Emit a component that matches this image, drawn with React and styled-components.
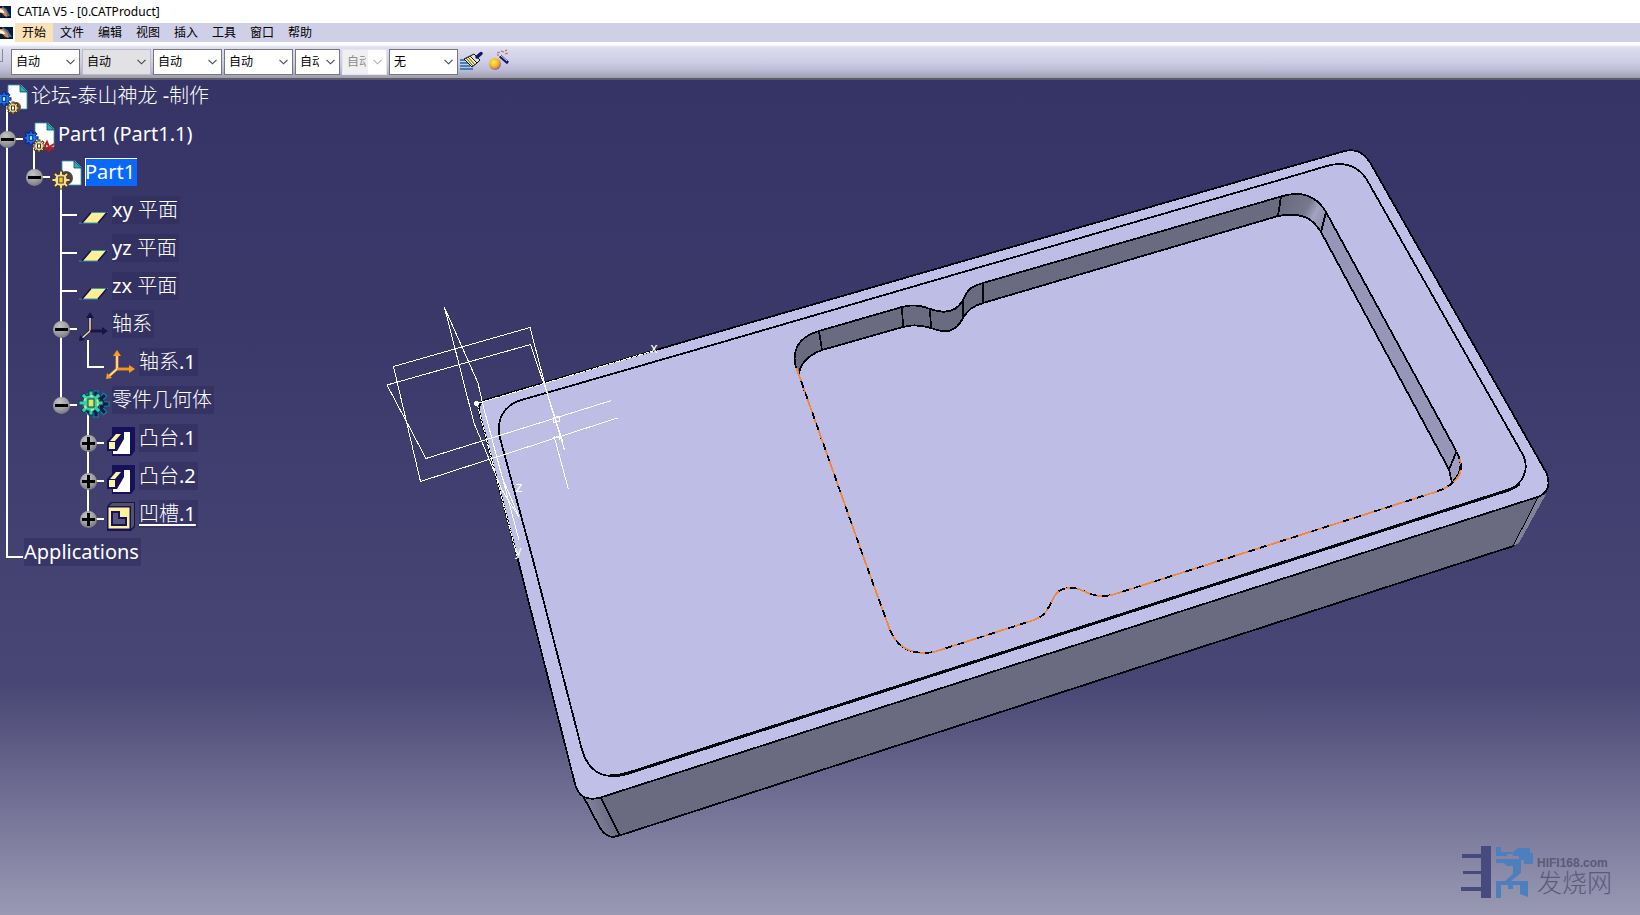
import React from 'react';
import styled, { createGlobalStyle, css } from 'styled-components';

const GlobalStyle = createGlobalStyle`
  body {
    margin: 0;
  }

  * {
    box-sizing: border-box;
  }

  button,
  select {
    font: inherit;
    color: inherit;
  }
`;

const Window = styled.div`
  display: flex;
  flex-direction: column;
  min-height: 100vh;
  font-family: 'Noto Sans', 'Noto Sans CJK SC', sans-serif;
  font-size: 12px;
  color: #000;
  background: #fff;
`;

const TitleBar = styled.header`
  display: flex;
  align-items: center;
  gap: 6px;
  height: 23px;
`;

const Title = styled.h1`
  margin: 0;
  font-size: 12px;
  line-height: 23px;
  font-weight: 400;
`;

const MenuBar = styled.nav`
  display: flex;
  align-items: center;
  height: 19px;
  background: #cfcfe8;
`;

const MenuIconBox = styled.span`
  display: flex;
  align-items: center;
  width: 15px;
  height: 19px;
  background: #fff;
`;

const MenuItem = styled.button`
  width: 38px;
  height: 19px;
  padding: 0;
  border: 0;
  line-height: 18px;
  background: ${({ $active }) => ($active ? '#fbe1b6' : 'transparent')};
`;

const ToolBar = styled.div`
  display: flex;
  align-items: flex-start;
  gap: 2px;
  height: 38px;
  padding-top: 7px;
  border-bottom: 2px solid #5c5c66;
  background: linear-gradient(#fff 0, #fafaff 3px, #dedeee 5px, #cdcde6 20px, #bcbcd6 28px, #9d9dab 36px);
`;

const Grip = styled.span`
  width: 3px;
  height: 13px;
  margin-right: 6px;
  border-right: 1px solid #8a8a96;
  border-bottom: 1px solid #8a8a96;
`;

const Combo = styled.label`
  display: grid;
  width: ${({ $narrow }) => ($narrow ? '45px' : '69px')};
  height: 26px;
  align-items: center;
  border: 1px solid ${({ $tone }) => ($tone === 'disabled' ? '#e4e4ee' : $tone === 'gray' ? '#bcbcc4' : '#77777f')};
  background: ${({ $tone }) => ($tone === 'gray' ? '#e2e2e4' : '#fff')};

  > * {
    grid-area: 1 / 1;
  }

  svg {
    justify-self: end;
    margin-right: 4px;
    pointer-events: none;
  }
`;

const ComboSelect = styled.select`
  width: 100%;
  height: 24px;
  padding: 0 20px 0 4px;
  border: 0;
  appearance: none;
  background: transparent;
  line-height: 20px;
  overflow: hidden;
  text-overflow: clip;

  &:disabled {
    color: #8c8c8c;
    opacity: 1;
    background: linear-gradient(90deg, #f0f0f2 25px, #fff 25px);
  }
`;

const ToolButton = styled.button`
  display: flex;
  width: 26px;
  height: 26px;
  padding: 0;
  border: 0;
  background: transparent;
`;

const Viewport = styled.main`
  position: relative;
  flex: 1;
  overflow: hidden;
  background: linear-gradient(#363466 0%, #3a396a 30%, #434271 58%, #474674 72%, #5c5a83 79%, #9a99b4 100%);
`;

const ModelCanvas = styled.svg`
  position: absolute;
  top: 0;
  left: 0;
  width: 100%;
  height: auto;
`;

const Tree = styled.ul`
  position: relative;
  width: max-content;
  margin: 0;
  padding: 2px 0 0;
  list-style: none;
  color: #fff;
`;

const TreeRow = styled.li`
  display: flex;
  align-items: flex-start;
  height: 38px;
`;

const upper = 'linear-gradient(#fff, #fff) 6px 0 / 2px 20px no-repeat';
const full = 'linear-gradient(#fff, #fff) 6px 0 / 2px 38px no-repeat';
const stub = 'linear-gradient(#fff, #fff) 6px 18px / 17px 2px no-repeat';

const guideBackground = {
  blank: 'none',
  line: full,
  tee: `${full}, ${stub}`,
  corner: `${upper}, ${stub}`,
  end: `${upper}, ${stub}`,
};

const Guide = styled.span`
  display: flex;
  align-items: center;
  flex: none;
  width: ${({ $kind }) => ($kind === 'end' ? '24px' : '27px')};
  height: 38px;
  background: ${({ $kind }) => guideBackground[$kind]};
`;

const Toggle = styled.button`
  display: flex;
  width: 17px;
  height: 17px;
  margin-left: -1px;
  padding: 0;
  border: 0;
  border-radius: 50%;
  background: radial-gradient(circle at 40% 30%, #c4c4c4, #9a9a9c 50%, #5e5e66);
`;

const NodeIcon = styled.svg`
  flex: none;
  width: 34px;
  height: 38px;
  margin-left: -3px;
`;

const Label = styled.span`
  height: 28px;
  padding: 0 2px 0 0;
  font-size: 20px;
  line-height: 28px;
  font-weight: 300;
  font-family: 'Noto Sans', 'Noto Sans CJK SC', sans-serif;
  white-space: pre;
  ${({ $plain }) => !$plain && css`
    background: rgba(46, 42, 92, 0.5);
  `}
  ${({ $selected }) => $selected && css`
    background: #0a68fb;
    box-shadow: inset 1px 1px #fff;
  `}
  ${({ $current }) => $current && css`
    text-decoration: underline;
    text-underline-offset: 3px;
  `}
`;

const Latin = styled.span`
  font-weight: 400;
`;

const Watermark = styled.aside`
  position: absolute;
  right: 28px;
  bottom: 17px;
  display: flex;
  align-items: flex-end;
  gap: 4px;
  color: #5b5a78;
`;

const WatermarkText = styled.div`
  display: flex;
  flex-direction: column;
`;

const Domain = styled.strong`
  font: bold 12px/12px 'Liberation Sans', sans-serif;
`;

const SiteName = styled.span`
  font: 300 25px/29px 'Liberation Sans', 'Noto Sans CJK SC', sans-serif;
`;

const AppIcon = ({ size = 12 }) => (
  <svg width={size} height="12" viewBox="0 0 12 12" preserveAspectRatio="none" aria-hidden="true">
    <path d="M0 0H12V12H0Z" fill="#081a33" />
    <path d="M2 0L7 3L11 10L7 10L3 6Z" fill="#2c78b8" />
    <path d="M0 2L3 2L7 6L8 11L5 10L2 7L0 7Z" fill="#ed8438" />
    <path d="M0 3L3 4L5 7L3 7L0 6Z" fill="#fff" />
  </svg>
);

const Chevron = ({ color = '#444' }) => (
  <svg width="9" height="6" viewBox="0 0 9 6" aria-hidden="true">
    <path d="M.5 .8L4.500 4.800L8.500 .8" fill="none" stroke={color} strokeWidth="1.100" />
  </svg>
);

const BrushIcon = () => (
  <svg width="26" height="26" viewBox="3 0 26 26" aria-hidden="true">
    <path d="M3 11H10M3 14H11M3 17H13M3 20H16" stroke="#1769b4" strokeWidth="1.400" />
    <path d="M7 10L13 7L20 14L15 18Z" fill="#fff8a0" stroke="#111" />
    <path d="M9 9L16 17M11 8L18 16" stroke="#111" strokeWidth=".8" />
    <path d="M13 7L17 5L23 11L20 14Z" fill="#e4e4e8" stroke="#111" />
    <path d="M20 8L24 4.500" stroke="#14146a" strokeWidth="3.500" strokeLinecap="round" />
  </svg>
);

const WandIcon = () => (
  <svg width="26" height="26" viewBox="1 0 26 26" aria-hidden="true">
    <defs>
      <radialGradient id="ball" cx=".4" cy=".35" r=".65">
        <stop offset="0" stopColor="#fff04a" />
        <stop offset=".6" stopColor="#f2b521" />
        <stop offset="1" stopColor="#a05a9a" />
      </radialGradient>
    </defs>
    <circle cx="8" cy="15" r="6" fill="url(#ball)" />
    <path d="M13 7L21 14" stroke="#14146a" strokeWidth="3" />
    <path d="M13 6L20 12" stroke="#e8e8f4" strokeWidth="1" />
    <path d="M10 4L13 3M14 2L17 3M18 2L20 1M18 5L21 4M11 7V5" stroke="#c46a5a" strokeWidth="1.200" />
  </svg>
);

// eight square teeth around a hub
const Gear = ({ cx, cy, r, fill, edge, core }) => {
  const tooth = { x: cx - r / 6, y: cy - r, width: r / 3, height: r };
  const angles = [0, 45, 90, 135, 180, 225, 270, 315];
  return (
    <g>
      {angles.map((angle) => (
        <rect key={angle} {...tooth} fill={fill} stroke={edge} transform={`rotate(${angle} ${cx} ${cy})`} />
      ))}
      <circle cx={cx} cy={cy} r={r * 0.65} fill={fill} />
      <rect x={cx - r / 4} y={cy - r / 3} width={r / 2} height={r / 1.5} fill={core} stroke={edge} />
    </g>
  );
};

const Paper = () => (
  <g>
    <path d="M8 3H21L27 9V27H8Z" fill="#fff" stroke="#2f9fa8" strokeWidth=".8" />
    <path d="M20 3L27 10H20Z" fill="#25b4b0" stroke="#0b4b66" strokeWidth=".8" />
  </g>
);

const Arrows = ({ color, edge, tip }) => (
  <g fill="none">
    <path d="M9 5V21H24M9 21L0 29" stroke={edge} strokeWidth="3" />
    <path d="M9 5V21L0 29" stroke={color} strokeWidth="1.600" />
    <path d="M9 21H24" stroke={tip} strokeWidth="1.400" />
    <path d="M9 2L13 8H5ZM27 21L21 17V25ZM-2 31L-1 25L4 30Z" fill={tip} />
  </g>
);

const PadShape = () => (
  <g>
    <path d="M4 3H27V27L23 32H4Z" fill="#17115c" />
    <path d="M10 8H22V30H5V26H9L15 15V8Z" fill="#fff" />
    <path d="M-1 17L8 8H16V15L9 27H-1Z" fill="#17115c" />
    <path d="M2 17L8 10H13L7 17Z" fill="#fff5a0" />
    <path d="M1 18H7V25H1Z" fill="#fff5a0" />
  </g>
);

const glyphs = {
  product: (
    <g>
      <path d="M7 24V38" stroke="#fff" strokeWidth="2" />
      <Paper />
      <Gear cx={4} cy={17} r={7} fill="#1e78ee" edge="#07258c" core="#a8f0ff" />
      <circle cx="16" cy="25" r="5" fill="#6b5640" />
      <Gear cx={13} cy={26} r={6} fill="#f6e1a0" edge="#4b3718" core="#fff" />
    </g>
  ),
  component: (
    <g>
      <path d="M7 24V38" stroke="#fff" strokeWidth="2" />
      <Paper />
      <Gear cx={4} cy={18} r={7} fill="#1e78ee" edge="#07258c" core="#a8f0ff" />
      <path d="M16 30L20 22L22 27L27 29M18 30L27 24M21 31L25 28" fill="none" stroke="#c01824" strokeWidth="2" />
      <Gear cx={12} cy={26} r={6} fill="#f6e1a0" edge="#4b3718" core="#fff" />
    </g>
  ),
  part: (
    <g>
      <path d="M7 28V38" stroke="#fff" strokeWidth="2" />
      <Paper />
      <circle cx="12" cy="20" r="7" fill="#4d4650" />
      <Gear cx={7} cy={22} r={9} fill="#f5df94" edge="#4b3718" core="#e9cf3d" />
    </g>
  ),
  plane: (
    <g>
      <path d="M1 27L10 16.500H26L17 27Z" fill="#ffee93" />
      <path d="M-2 27H17M10 16.500H27" stroke="#2c9ca8" strokeWidth="1" />
      <path d="M1 27L10 16.500M17 27L26 16.500" stroke="#14104e" strokeWidth="1.500" />
    </g>
  ),
  axes: (
    <g>
      <path d="M7 30V38" stroke="#fff" strokeWidth="2" />
      <Arrows color="#f2d6b0" edge="#221b3a" tip="#17124c" />
    </g>
  ),
  axis: <Arrows color="#ffe9a0" edge="#e08a20" tip="#ff9a1e" />,
  body: (
    <g>
      <path d="M7 28V38" stroke="#fff" strokeWidth="2" />
      <Gear cx={15} cy={18} r={13} fill="#0b1d50" edge="#0c8f96" core="#071a4a" />
      <Gear cx={10} cy={17} r={12} fill="#38cfae" edge="#0a3d62" core="#d8ee58" />
      <circle cx="10" cy="17" r="7" fill="none" stroke="#c8ec5c" strokeWidth="2" strokeDasharray="3 5" />
    </g>
  ),
  pad: <PadShape />,
  pocket: (
    <g>
      <path d="M3 2H27V27L23 31H-1V6Z" fill="#17115c" />
      <path d="M4 3H26V26L23 29V6H1Z" fill="#55525f" />
      <path d="M0 7H22V29H0Z" fill="#fff09a" stroke="#17115c" />
      <path d="M4 12H11V18H18V25H4Z" fill="#55577e" stroke="#17115c" strokeWidth="2" />
    </g>
  ),
};

const menus = ['开始', '文件', '编辑', '视图', '插入', '工具', '窗口', '帮助'];

const combos = [
  { name: '填充颜色', value: '自动' },
  { name: '透明度', value: '自动', tone: 'gray' },
  { name: '线宽', value: '自动' },
  { name: '线型', value: '自动' },
  { name: '点符号', value: '自动', narrow: true },
  { name: '渲染样式', value: '自动', narrow: true, tone: 'disabled' },
  { name: '图层', value: '无' },
];

const nodes = [
  { guides: [], icon: 'product', label: '论坛-泰山神龙 -制作', plain: true },
  { guides: ['tee'], toggle: 'minus', icon: 'component', label: 'Part1 (Part1.1)', plain: true },
  { guides: ['line', 'corner'], toggle: 'minus', icon: 'part', label: 'Part1', selected: true },
  { guides: ['line', 'blank', 'tee'], icon: 'plane', label: 'xy 平面' },
  { guides: ['line', 'blank', 'tee'], icon: 'plane', label: 'yz 平面' },
  { guides: ['line', 'blank', 'tee'], icon: 'plane', label: 'zx 平面' },
  { guides: ['line', 'blank', 'tee'], toggle: 'minus', icon: 'axes', label: '轴系' },
  { guides: ['line', 'blank', 'line', 'corner'], icon: 'axis', label: '轴系.1' },
  { guides: ['line', 'blank', 'corner'], toggle: 'minus', icon: 'body', label: '零件几何体' },
  { guides: ['line', 'blank', 'blank', 'tee'], toggle: 'plus', icon: 'pad', label: '凸台.1' },
  { guides: ['line', 'blank', 'blank', 'tee'], toggle: 'plus', icon: 'pad', label: '凸台.2' },
  { guides: ['line', 'blank', 'blank', 'corner'], toggle: 'plus', icon: 'pocket', label: '凹槽.1', current: true },
  { guides: ['end'], label: 'Applications' },
];

// Han characters keep the light weight, everything else is regular
const renderLabel = (text) =>
  text.split(/([\x20-\x7e]+)/).filter(Boolean).map((run, i) =>
    /^[\x20-\x7e]/.test(run) ? <Latin key={i}>{run}</Latin> : run
  );

const TreeNode = ({ node }) => (
  <TreeRow>
    {node.guides.map((kind, i) => (
      <Guide key={i} $kind={kind === 'tee' && node.toggle === 'plus' ? 'tee' : kind}>
        {node.toggle && i === node.guides.length - 1 && (
          <Toggle aria-label={node.toggle === 'plus' ? '展开' : '折叠'}>
            <svg width="17" height="17" viewBox="0 0 17 17" aria-hidden="true">
              <path d={node.toggle === 'plus' ? 'M2 8.500H15M8.500 2V15' : 'M2 8.500H15'} stroke="#000" strokeWidth="3" />
            </svg>
          </Toggle>
        )}
      </Guide>
    ))}
    {node.icon && (
      <NodeIcon viewBox="-3 0 34 38" aria-hidden="true">{glyphs[node.icon]}</NodeIcon>
    )}
    <Label
      $plain={node.plain}
      $selected={node.selected}
      $current={node.current}
    >
      {renderLabel(node.label)}
    </Label>
  </TreeRow>
);

const pocketTop = 'M798 372C795 366 794 360 795 355C796 342 806 335 819 331L902 307C912 304 920 305 930 309C944 314 956 313 963 300C968 288 973 286 983 283L1281 196.500C1302 190 1317 197 1326 212';
const pocketFloor = 'L1321 232C1312 217 1300 212 1278 216L983 303C973 306 968 310 963 318C956 332 946 334 931 328C921 325 913 324 903 327L822 350C809 355 801 363 799 373Z';
const pocketRim = 'M796.500 368L864.500 560L890 630C896 645 909 656 934 652L1031 621C1049 616 1048 605 1056 594C1061 588 1070 587 1079 589C1090 594 1097 598 1112 595L1437 491.500C1455 485 1464 474 1460 460L1456.500 451.500';

const Model = () => (
  <ModelCanvas viewBox="0 80 1640 835" role="img" aria-label="Part1" shapeRendering="crispEdges">
    <defs>
      <linearGradient id="cornerWall" gradientUnits="userSpaceOnUse" x1="1281" y1="200" x2="1324" y2="222">
        <stop offset="0" stopColor="#69697f" />
        <stop offset=".55" stopColor="#77778d" />
        <stop offset=".75" stopColor="#a3a3c2" />
        <stop offset="1" stopColor="#8f8fac" />
      </linearGradient>
      <linearGradient id="leftWall" gradientUnits="userSpaceOnUse" x1="583" y1="815" x2="612" y2="806">
        <stop offset="0" stopColor="#8988a5" />
        <stop offset="1" stopColor="#68687e" />
      </linearGradient>
    </defs>
    <g stroke="#05050c" strokeWidth="1.800" strokeLinejoin="round">
      {/* side walls */}
      <path d="M582 794L600 828Q606 837 613 837L619.500 835.500L600 795Z" fill="url(#leftWall)" />
      <path d="M600.500 797L619.500 835.500L1513.500 546L1539 496.500Z" fill="#6a6a80" />
      <path d="M1539 496.500L1513.500 546L1519 543L1546 494Z" fill="#818198" stroke="none" />
      {/* top face and lip */}
      <path
        d="M485 400L690 340L780 314L1240 181L1343 151.500Q1361 146 1371.500 165L1546.500 473Q1553 490 1539 496.500L600.500 797.500Q580 803 575 784L518 560L480 415Q477 404 485 400Z"
        fill="#c0bfe8"
      />
      <path
        d="M521.500 400L690 351.500L1279.500 180L1325 166.500C1345 160 1359 167 1367 180L1523 455C1530 469 1523 485 1507 490.500L627 773.500C602 781 588 770 582 750L533 560L500.500 440C495 420 504 405 521.500 400Z"
        fill="#bebde6"
      />
      <path d="M610 776Q618 776 627 773.500L1507 490.500Q1515 488 1519 484" fill="none" strokeWidth="3" />
      {/* pocket */}
      <path d={`${pocketTop}${pocketFloor}`} fill="#6a6a80" />
      <path d="M1281 196.500C1302 190 1317 197 1326 212L1321 232C1312 217 1300 212 1278 216Z" fill="url(#cornerWall)" />
      <path d="M1326 212L1456.500 451.500L1449 469.500L1321 232Z" fill="#9796b8" />
      <path d="M1456.500 451.500Q1464 465 1458 475L1452 483L1449 469.500Z" fill="#a09fc2" />
      <path d="M819 331L822 350M902 307L903 327M930 309L931 328M963 300V318M983 283V303" fill="none" />
      <path d={pocketRim} fill="none" />
      <path d={pocketRim} fill="none" stroke="#f2873a" strokeDasharray="14 7 5 7" />
    </g>
    {/* reference planes and axis system */}
    <g fill="none" stroke="#fff" strokeWidth="1">
      <path d="M611.500 400.500L426 458.500L387 385L530.500 344.500L550 402L563 442" />
      <path d="M617.500 418L420.500 481.500L393.500 366.500L530 327.500L549 400L564.500 450" />
      <path d="M554 436L568.500 489.500M553 418L559 416L560 421L554 423ZM553 438L559 436L560 440" />
      <path d="M519 517L502 477L483 405L478 383L444.500 307.500L474 423L502 490L519 517" />
      <path d="M483 405L519 540" />
      <path d="M477 403.500L653 351M477 403.500L517 556" strokeDasharray="5 1" />
      <circle cx="476.500" cy="403.500" r="2" fill="#fff" />
    </g>
    <g fill="#fff" fontFamily="Liberation Sans, sans-serif" fontSize="14" textAnchor="middle">
      <text x="654" y="353">x</text>
      <text x="519" y="492">z</text>
      <text x="518" y="556">y</text>
    </g>
  </ModelCanvas>
);

const SiteLogo = () => (
  <svg width="72" height="52" viewBox="0 0 72 52" aria-hidden="true">
    <path d="M1 8H20V0H30V52H20V45H0V41H20V28H2V25H20V12H1Z" fill="#474a7d" />
    <path
      d="M35 1H40V6H52L57 2H69V7H72V18H63V14H58V10H52V8H46V10H35ZM35 13H60V27L50 35H67V51L59 48V39H52V43H47V39H40V52H35V35H44L52 28V20H46L43 17H35Z"
      fill="#4e7fbd"
    />
  </svg>
);

const App = () => (
  <Window>
    <GlobalStyle />
    <TitleBar>
      <AppIcon size={11} />
      <Title>CATIA V5 - [0.CATProduct]</Title>
    </TitleBar>
    <MenuBar>
      <MenuIconBox>
        <AppIcon size={13} />
      </MenuIconBox>
      {menus.map((name, index) => (
        <MenuItem key={name} $active={index === 0}>{name}</MenuItem>
      ))}
    </MenuBar>
    <ToolBar>
      <Grip />
      {combos.map((combo) => (
        <Combo key={combo.name} $narrow={combo.narrow} $tone={combo.tone}>
          <ComboSelect aria-label={combo.name} disabled={combo.tone === 'disabled'}>
            <option>{combo.value}</option>
          </ComboSelect>
          <Chevron color={combo.tone === 'disabled' ? '#b0b0b0' : '#444'} />
        </Combo>
      ))}
      <ToolButton aria-label="格式刷"><BrushIcon /></ToolButton>
      <ToolButton aria-label="向导"><WandIcon /></ToolButton>
    </ToolBar>
    <Viewport>
      <Model />
      <Tree>
        {nodes.map((node) => (
          <TreeNode key={node.label} node={node} />
        ))}
      </Tree>
      <Watermark>
        <SiteLogo />
        <WatermarkText>
          <Domain>HIFI168.com</Domain>
          <SiteName>发烧网</SiteName>
        </WatermarkText>
      </Watermark>
    </Viewport>
  </Window>
);

export default App;
